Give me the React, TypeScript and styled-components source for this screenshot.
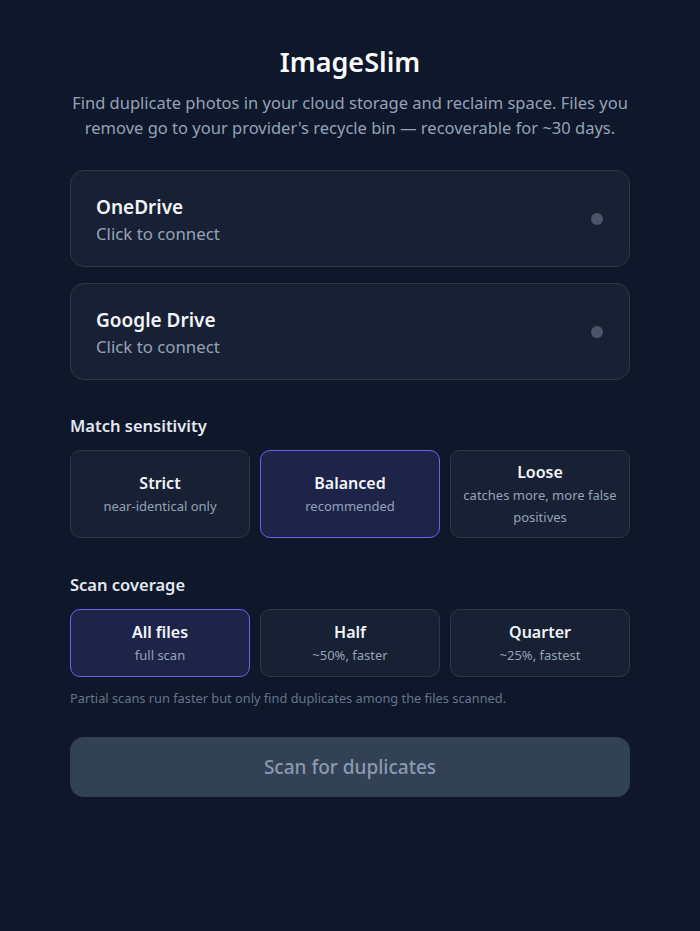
import React from "react";
import styled, { createGlobalStyle } from "styled-components";

const Global = createGlobalStyle`
  html, body { margin: 0; padding: 0; background: #0f172a; }
  body { font-family: "Noto Sans", "Open Sans", sans-serif; color: #e2e8f0; }
  * { box-sizing: border-box; }
`;

const Page = styled.main`
  min-height: 931px;
  background: #0f172a;
  display: flex;
  justify-content: center;
  padding: 40px 0;
`;

const Column = styled.div`
  width: 560px;
  display: flex;
  flex-direction: column;
`;

const Title = styled.h1`
  margin: 0;
  text-align: center;
  font-size: 27px;
  font-weight: 600;
  line-height: 44px;
  color: #f8fafc;
`;

const Lead = styled.p`
  margin: 6px 0 30px;
  text-align: center;
  font-size: 16.5px;
  line-height: 25px;
  color: #94a3b8;
`;

const Providers = styled.div`
  display: flex;
  flex-direction: column;
  gap: 16px;
`;

const ProviderCard = styled.button`
  height: 97px;
  display: flex;
  align-items: center;
  justify-content: space-between;
  padding: 2px 25px 0;
  border-radius: 14px;
  border: 1px solid #2d3748;
  background: #182033;
  font-family: inherit;
  text-align: left;
  cursor: pointer;
`;

const ProviderText = styled.div`
  display: flex;
  flex-direction: column;
  gap: 2px;
`;

const ProviderName = styled.span`
  font-size: 19px;
  font-weight: 600;
  color: #f1f5f9;
  line-height: 26px;
`;

const ProviderStatus = styled.span`
  font-size: 16.8px;
  color: #94a3b8;
  line-height: 24px;
`;

const Dot = styled.span`
  width: 12px;
  height: 12px;
  border-radius: 50%;
  background: #4b5567;
  margin: 0 1px 2px 0;
`;

const SectionLabel = styled.h2<{ $top: number }>`
  margin: ${(p) => p.$top}px 0 12px;
  font-size: 16.5px;
  font-weight: 600;
  line-height: 24px;
  color: #e2e8f0;
`;

const OptionGrid = styled.div`
  display: grid;
  grid-template-columns: repeat(3, 1fr);
  gap: 10px;
`;

const Option = styled.button<{ $active?: boolean; $h: number }>`
  height: ${(p) => p.$h}px;
  display: flex;
  flex-direction: column;
  align-items: center;
  justify-content: center;
  padding: 0 8px;
  border-radius: 10px;
  border: 1px solid ${(p) => (p.$active ? "#6366f1" : "#2d3748")};
  background: ${(p) => (p.$active ? "#1e2448" : "#182033")};
  font-family: inherit;
  cursor: pointer;
`;

const OptionTitle = styled.span`
  font-size: 16px;
  font-weight: 600;
  line-height: 24px;
  color: #f1f5f9;
`;

const OptionSub = styled.span`
  font-size: 13px;
  line-height: 22px;
  color: #94a3b8;
  text-align: center;
`;

const Note = styled.p`
  margin: 12px 0 30px;
  font-size: 12.8px;
  line-height: 18px;
  color: #64748b;
`;

const ScanButton = styled.button`
  height: 60px;
  border: none;
  border-radius: 14px;
  background: #334155;
  color: #8a9ab0;
  font-family: inherit;
  font-size: 19px;
  font-weight: 500;
  cursor: not-allowed;
`;

const providers = ["OneDrive", "Google Drive"];
const sensitivity = [
  { t: "Strict", s: "near-identical only" },
  { t: "Balanced", s: "recommended", active: true },
  { t: "Loose", s: "catches more, more false positives" },
];
const coverage = [
  { t: "All files", s: "full scan", active: true },
  { t: "Half", s: "~50%, faster" },
  { t: "Quarter", s: "~25%, fastest" },
];

export default function App() {
  return (
    <>
      <Global />
      <Page>
        <Column>
          <Title>ImageSlim</Title>
          <Lead>
            Find duplicate photos in your cloud storage and reclaim space. Files you remove go to
            your provider's recycle bin — recoverable for ~30 days.
          </Lead>
          <Providers>
            {providers.map((p) => (
              <ProviderCard key={p}>
                <ProviderText>
                  <ProviderName>{p}</ProviderName>
                  <ProviderStatus>Click to connect</ProviderStatus>
                </ProviderText>
                <Dot />
              </ProviderCard>
            ))}
          </Providers>
          <SectionLabel $top={34}>Match sensitivity</SectionLabel>
          <OptionGrid>
            {sensitivity.map((o) => (
              <Option key={o.t} $active={o.active} $h={88}>
                <OptionTitle>{o.t}</OptionTitle>
                <OptionSub>{o.s}</OptionSub>
              </Option>
            ))}
          </OptionGrid>
          <SectionLabel $top={35}>Scan coverage</SectionLabel>
          <OptionGrid>
            {coverage.map((o) => (
              <Option key={o.t} $active={o.active} $h={68}>
                <OptionTitle>{o.t}</OptionTitle>
                <OptionSub>{o.s}</OptionSub>
              </Option>
            ))}
          </OptionGrid>
          <Note>Partial scans run faster but only find duplicates among the files scanned.</Note>
          <ScanButton disabled>Scan for duplicates</ScanButton>
        </Column>
      </Page>
    </>
  );
}
